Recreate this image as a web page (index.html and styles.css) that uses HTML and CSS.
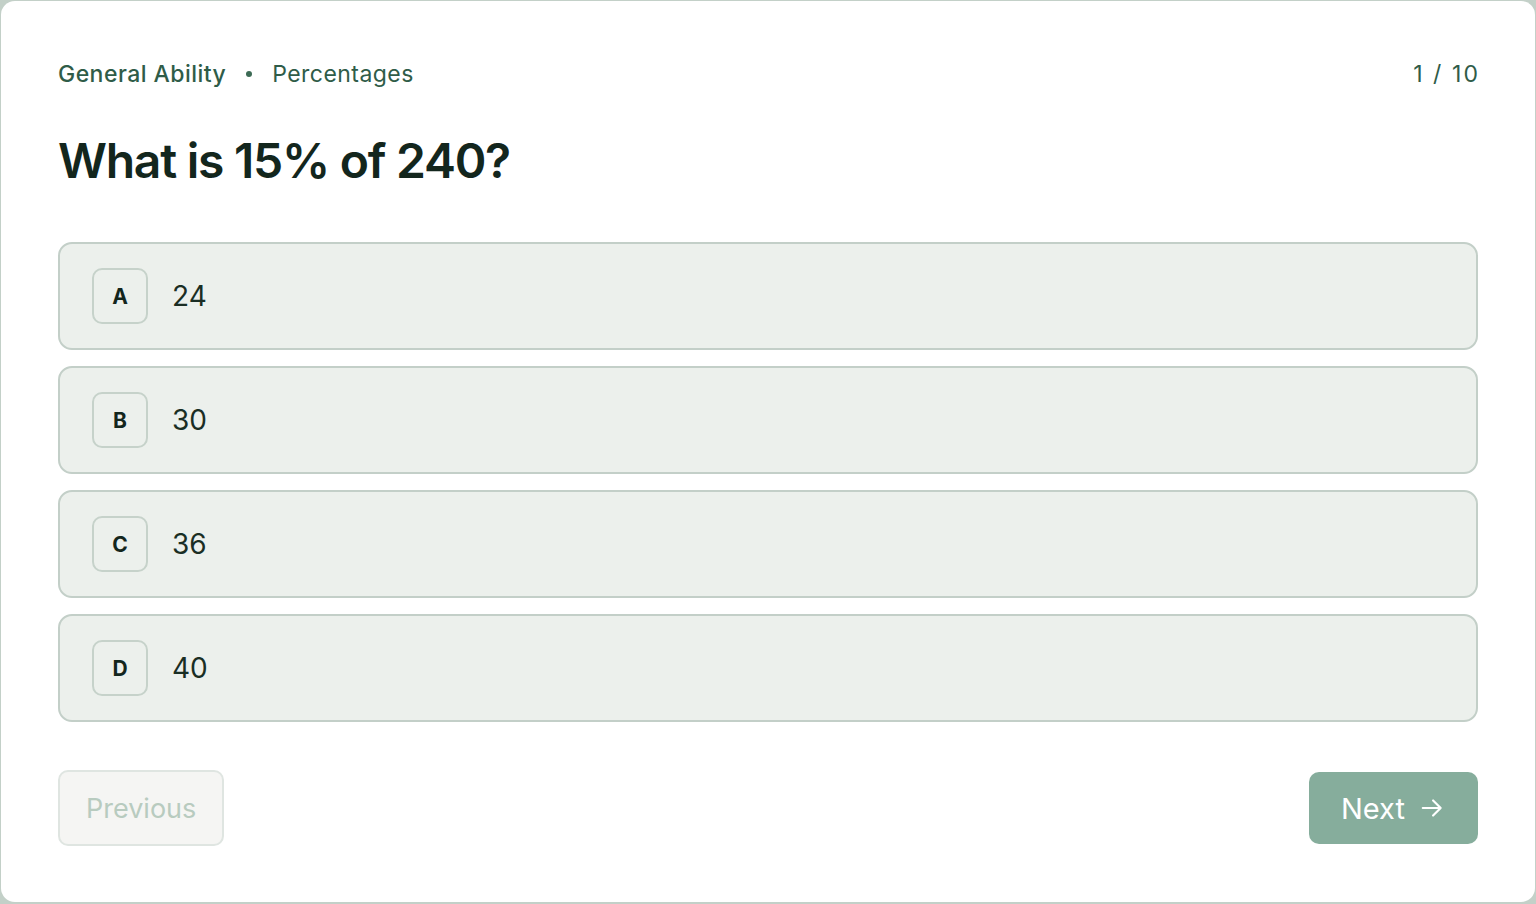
FILE: index.html
```html
<!DOCTYPE html>
<html lang="en">
<head>
<meta charset="utf-8">
<title>Quiz – General Ability</title>
<link rel="stylesheet" href="styles.css">
</head>
<body>
<main class="card">
  <header class="meta">
    <div class="crumbs">
      <span class="crumb-main">General Ability</span>
      <span class="crumb-dot"></span>
      <span class="crumb-sub">Percentages</span>
    </div>
    <div class="counter">1 / 10</div>
  </header>

  <h1 class="question">What is 15% of 240?</h1>

  <ul class="options">
    <li class="option"><span class="letter">A</span><span class="value">24</span></li>
    <li class="option"><span class="letter">B</span><span class="value">30</span></li>
    <li class="option"><span class="letter">C</span><span class="value">36</span></li>
    <li class="option"><span class="letter">D</span><span class="value">40</span></li>
  </ul>

  <footer class="nav">
    <button class="btn btn-prev" disabled>Previous</button>
    <button class="btn btn-next">Next
      <svg class="arrow" viewBox="0 0 24 24" width="26" height="26" aria-hidden="true">
        <path d="M3.5 12h16.5M13 5l7 7-7 7" fill="none" stroke="currentColor" stroke-width="2" stroke-linecap="round" stroke-linejoin="round"/>
      </svg>
    </button>
  </footer>
</main>
</body>
</html>
```

FILE: styles.css
```css
* { box-sizing: border-box; }

html, body { height: 100%; }

body {
  margin: 0;
  padding: 1px;
  background: #c3d0c8;
  font-family: Inter, "Noto Sans", "Liberation Sans", sans-serif;
  color: #13261d;
}

.card {
  height: 901px;
  background: #ffffff;
  border-radius: 14px;
  padding: 54px 57px 0 57px;
  display: flex;
  flex-direction: column;
}

.meta {
  display: flex;
  justify-content: space-between;
  align-items: center;
  height: 38px;
  font-size: 23px;
  letter-spacing: 0.02em;
  color: #2f5c48;
}

.crumbs {
  display: flex;
  align-items: center;
  gap: 20px;
}

.crumb-main { font-weight: 500; }

.crumb-dot {
  width: 6px;
  height: 6px;
  border-radius: 50%;
  background: #3d6b55;
}

.counter { letter-spacing: 0.09em; margin-right: -2px; }

.question {
  margin: 38px 0 0;
  font-size: 48px;
  line-height: 60px;
  font-weight: 600;
  letter-spacing: -0.026em;
  color: #13261d;
}

.options {
  list-style: none;
  margin: 51px 0 0;
  padding: 0;
  display: flex;
  flex-direction: column;
  gap: 16px;
}

.option {
  height: 108px;
  display: flex;
  align-items: center;
  gap: 24px;
  padding: 0 32px;
  background: #ecf0ec;
  border: 2px solid #c3cfc8;
  border-radius: 14px;
}

.letter {
  width: 56px;
  height: 56px;
  display: flex;
  align-items: center;
  justify-content: center;
  border: 2px solid #c6d2ca;
  border-radius: 10px;
  font-size: 21px;
  font-weight: 700;
  color: #13261d;
}

.value {
  font-size: 28px;
  color: #1a2e24;
}

.nav {
  margin-top: 48px;
  display: flex;
  justify-content: space-between;
  align-items: center;
}

.btn {
  font-family: inherit;
  border-radius: 10px;
  display: flex;
  align-items: center;
  cursor: pointer;
}

.btn-prev {
  height: 76px;
  padding: 0 26px;
  font-size: 27px;
  background: #f5f5f3;
  border: 2px solid #dfe5e1;
  color: #b8cbbf;
  cursor: default;
}

.btn-next {
  height: 72px;
  padding: 0 33px 0 32px;
  gap: 14px;
  font-size: 29px;
  background: #86ad9c;
  border: none;
  color: #ffffff;
}

.arrow { display: block; }
```
